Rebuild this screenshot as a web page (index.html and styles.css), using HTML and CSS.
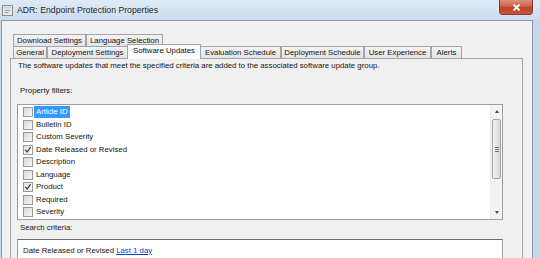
FILE: index.html
```html
<!DOCTYPE html>
<html lang="en">
<head>
    <meta charset="UTF-8">
    <title>ADR: Endpoint Protection Properties</title>
    <link rel="stylesheet" href="styles.css">
</head>
<body>
    <div class="window">
        <div class="titlebar">
            <svg class="app-icon" width="11" height="11" viewBox="0 0 11 11">
                <rect x="0.5" y="0.5" width="10" height="10" fill="#ececec" stroke="#8d8d8d"/>
                <rect x="1.5" y="1.5" width="8" height="2" fill="#c9d3dd"/>
                <path d="M2.5 5.5h6M2.5 7.5h4" stroke="#9a9a9a"/>
            </svg>
            <span class="title">ADR: Endpoint Protection Properties</span>
            <div class="close-btn">
                <svg width="9" height="7" viewBox="0 0 9 7">
                    <path d="M1.5 0.5L7.5 6.5M7.5 0.5L1.5 6.5" stroke="#fff" stroke-width="1.8"/>
                </svg>
            </div>
        </div>
        <div class="frame">
            <div class="client">
                <div class="tab-row row-back">
                    <div class="tab">Download Settings</div>
                    <div class="tab">Language Selection</div>
                </div>
                <div class="tab-row row-front">
                    <div class="tab">General</div>
                    <div class="tab">Deployment Settings</div>
                    <div class="tab selected">Software Updates</div>
                    <div class="tab">Evaluation Schedule</div>
                    <div class="tab">Deployment Schedule</div>
                    <div class="tab">User Experience</div>
                    <div class="tab">Alerts</div>
                </div>
                <div class="panel">
                    <p class="desc">The software updates that meet the specified criteria are added to the associated software update group.</p>
                    <p class="label filters-label">Property filters:</p>
                    <div class="listbox">
                        <ul class="items">
                            <li class="item"><span class="check"></span><span class="item-text highlight">Article ID</span></li>
                            <li class="item"><span class="check"></span><span class="item-text">Bulletin ID</span></li>
                            <li class="item"><span class="check"></span><span class="item-text">Custom Severity</span></li>
                            <li class="item"><span class="check checked"><svg width="8" height="8" viewBox="0 0 8 8"><path d="M1.3 3.8L3.2 6L6.6 1.2" fill="none" stroke="#3a3a3a" stroke-width="1.2"/></svg></span><span class="item-text">Date Released or Revised</span></li>
                            <li class="item"><span class="check"></span><span class="item-text">Description</span></li>
                            <li class="item"><span class="check"></span><span class="item-text">Language</span></li>
                            <li class="item"><span class="check checked"><svg width="8" height="8" viewBox="0 0 8 8"><path d="M1.3 3.8L3.2 6L6.6 1.2" fill="none" stroke="#3a3a3a" stroke-width="1.2"/></svg></span><span class="item-text">Product</span></li>
                            <li class="item"><span class="check"></span><span class="item-text">Required</span></li>
                            <li class="item"><span class="check"></span><span class="item-text">Severity</span></li>
                        </ul>
                        <div class="scrollbar">
                            <div class="arrow"><span class="tri up"></span></div>
                            <div class="thumb"><span class="grip"></span></div>
                            <div class="track-rest"></div>
                            <div class="arrow"><span class="tri down"></span></div>
                        </div>
                    </div>
                    <p class="label criteria-label">Search criteria:</p>
                    <div class="criteria-box">Date Released or Revised <a href="#" class="link">Last 1 day</a></div>
                </div>
            </div>
        </div>
    </div>
</body>
</html>
```

FILE: styles.css
```css
body {
    margin: 0;
    padding: 0;
    font-family: 'Liberation Sans', Arial, sans-serif;
    color: #141414;
}
.window {
    width: 540px;
    height: 258px;
    overflow: hidden;
    display: flex;
    flex-direction: column;
    background: linear-gradient(90deg, #c6d8ec, #d3e2f2 50%, #c4d6eb);
}
.titlebar {
    flex-shrink: 0;
    height: 20px;
    display: flex;
    align-items: center;
    background: linear-gradient(#dfeaf6, #cbdcef);
}
.app-icon {
    margin-left: 2px;
    flex-shrink: 0;
}
.title {
    margin-left: 4px;
    font-size: 8.7px;
    color: #1e1e1e;
}
.close-btn {
    margin-left: auto;
    margin-right: 7px;
    align-self: flex-start;
    width: 34px;
    height: 15px;
    box-sizing: border-box;
    border: 1px solid #8e3a2a;
    border-top: none;
    border-radius: 0 0 4px 4px;
    background: linear-gradient(#dc907e, #cc6249 45%, #bd4229 55%, #c85639);
    display: flex;
    align-items: center;
    justify-content: center;
}
.frame {
    flex: 1;
    min-height: 0;
    display: flex;
    padding: 0 7px 0 1px;
}
.client {
    flex: 1;
    min-height: 0;
    background: #f0f0f0;
    border: 1px solid #8a9aab;
    border-bottom: none;
    padding: 13px 9px 0 8px;
    display: flex;
    flex-direction: column;
}
.tab-row {
    flex-shrink: 0;
    display: grid;
    margin-left: 3px;
    height: 12px;
    font-size: 7.8px;
}
.row-back {
    grid-template-columns: 73px 77px;
}
.row-front {
    grid-template-columns: 34px 81px 72px 81px 83px 67px 31px;
}
.tab {
    box-sizing: border-box;
    height: 12px;
    border: 1px solid #a2a5ab;
    border-bottom: none;
    background: linear-gradient(#f3f3f3, #e4e4e4);
    text-align: center;
    line-height: 11px;
    white-space: nowrap;
}
.tab.selected {
    position: relative;
    z-index: 1;
    height: 15px;
    margin: -2px -1px -1px;
    background: #fbfbfb;
    line-height: 11px;
}
.panel {
    flex: 1 0 auto;
    border: 1px solid #a2a5ab;
    border-bottom: none;
    background: #f0f0f0;
    padding: 0 0 0 7px;
    font-size: 7.8px;
}
.desc {
    margin: 2px 0 0;
    line-height: 10px;
    white-space: nowrap;
}
.label {
    margin: 0 0 0 2px;
    line-height: 10px;
}
.filters-label {
    margin-top: 15px;
}
.listbox {
    margin: 8px 0 0 -1px;
    width: 486px;
    height: 116px;
    box-sizing: border-box;
    border: 1px solid #9c9ea3;
    background: #fff;
    display: flex;
}
.items {
    flex: 1;
    list-style: none;
    margin: 0;
    padding: 1px 0 0 5px;
}
.item {
    height: 12.5px;
    display: flex;
    align-items: center;
}
.check {
    width: 10px;
    height: 10px;
    box-sizing: border-box;
    border: 1px solid #9a9a9a;
    background: linear-gradient(135deg, #d8d8d8, #f6f6f6);
    display: flex;
    align-items: center;
    justify-content: center;
}
.check.checked {
    background: linear-gradient(135deg, #e4e4e4, #fafafa);
}
.item-text {
    margin-left: 1px;
    padding: 0 2px;
    line-height: 12px;
}
.item-text.highlight {
    background: #3399ff;
    color: #fff;
}
.scrollbar {
    width: 11px;
    display: flex;
    flex-direction: column;
    background: #f3f3f3;
    border-left: 1px solid #ececec;
}
.arrow {
    height: 13px;
    display: flex;
    align-items: center;
    justify-content: center;
}
.tri {
    width: 0;
    height: 0;
    border-left: 2.5px solid transparent;
    border-right: 2.5px solid transparent;
}
.tri.up {
    border-bottom: 3px solid #4a4a4a;
}
.tri.down {
    border-top: 3px solid #4a4a4a;
}
.thumb {
    margin: 1px 1px 0;
    height: 60px;
    box-sizing: border-box;
    border: 1px solid #a6a6a6;
    border-radius: 2px;
    background: linear-gradient(90deg, #f4f4f4, #e6e6e6 50%, #d8d8d8);
    display: flex;
    align-items: center;
    justify-content: center;
}
.grip {
    width: 4px;
    height: 5px;
    background: repeating-linear-gradient(#6f6f6f 0 1px, transparent 1px 2px);
}
.track-rest {
    flex: 1;
}
.criteria-label {
    margin-top: 3px;
}
.criteria-box {
    margin: 6px 0 0 -1px;
    width: 486px;
    height: 40px;
    box-sizing: border-box;
    border: 1px solid #9c9ea3;
    border-top-color: #6f6f6f;
    background: #fff;
    padding: 6px 0 0 5px;
    line-height: 10px;
}
.link {
    color: #0645c8;
    text-decoration: underline;
}
```
